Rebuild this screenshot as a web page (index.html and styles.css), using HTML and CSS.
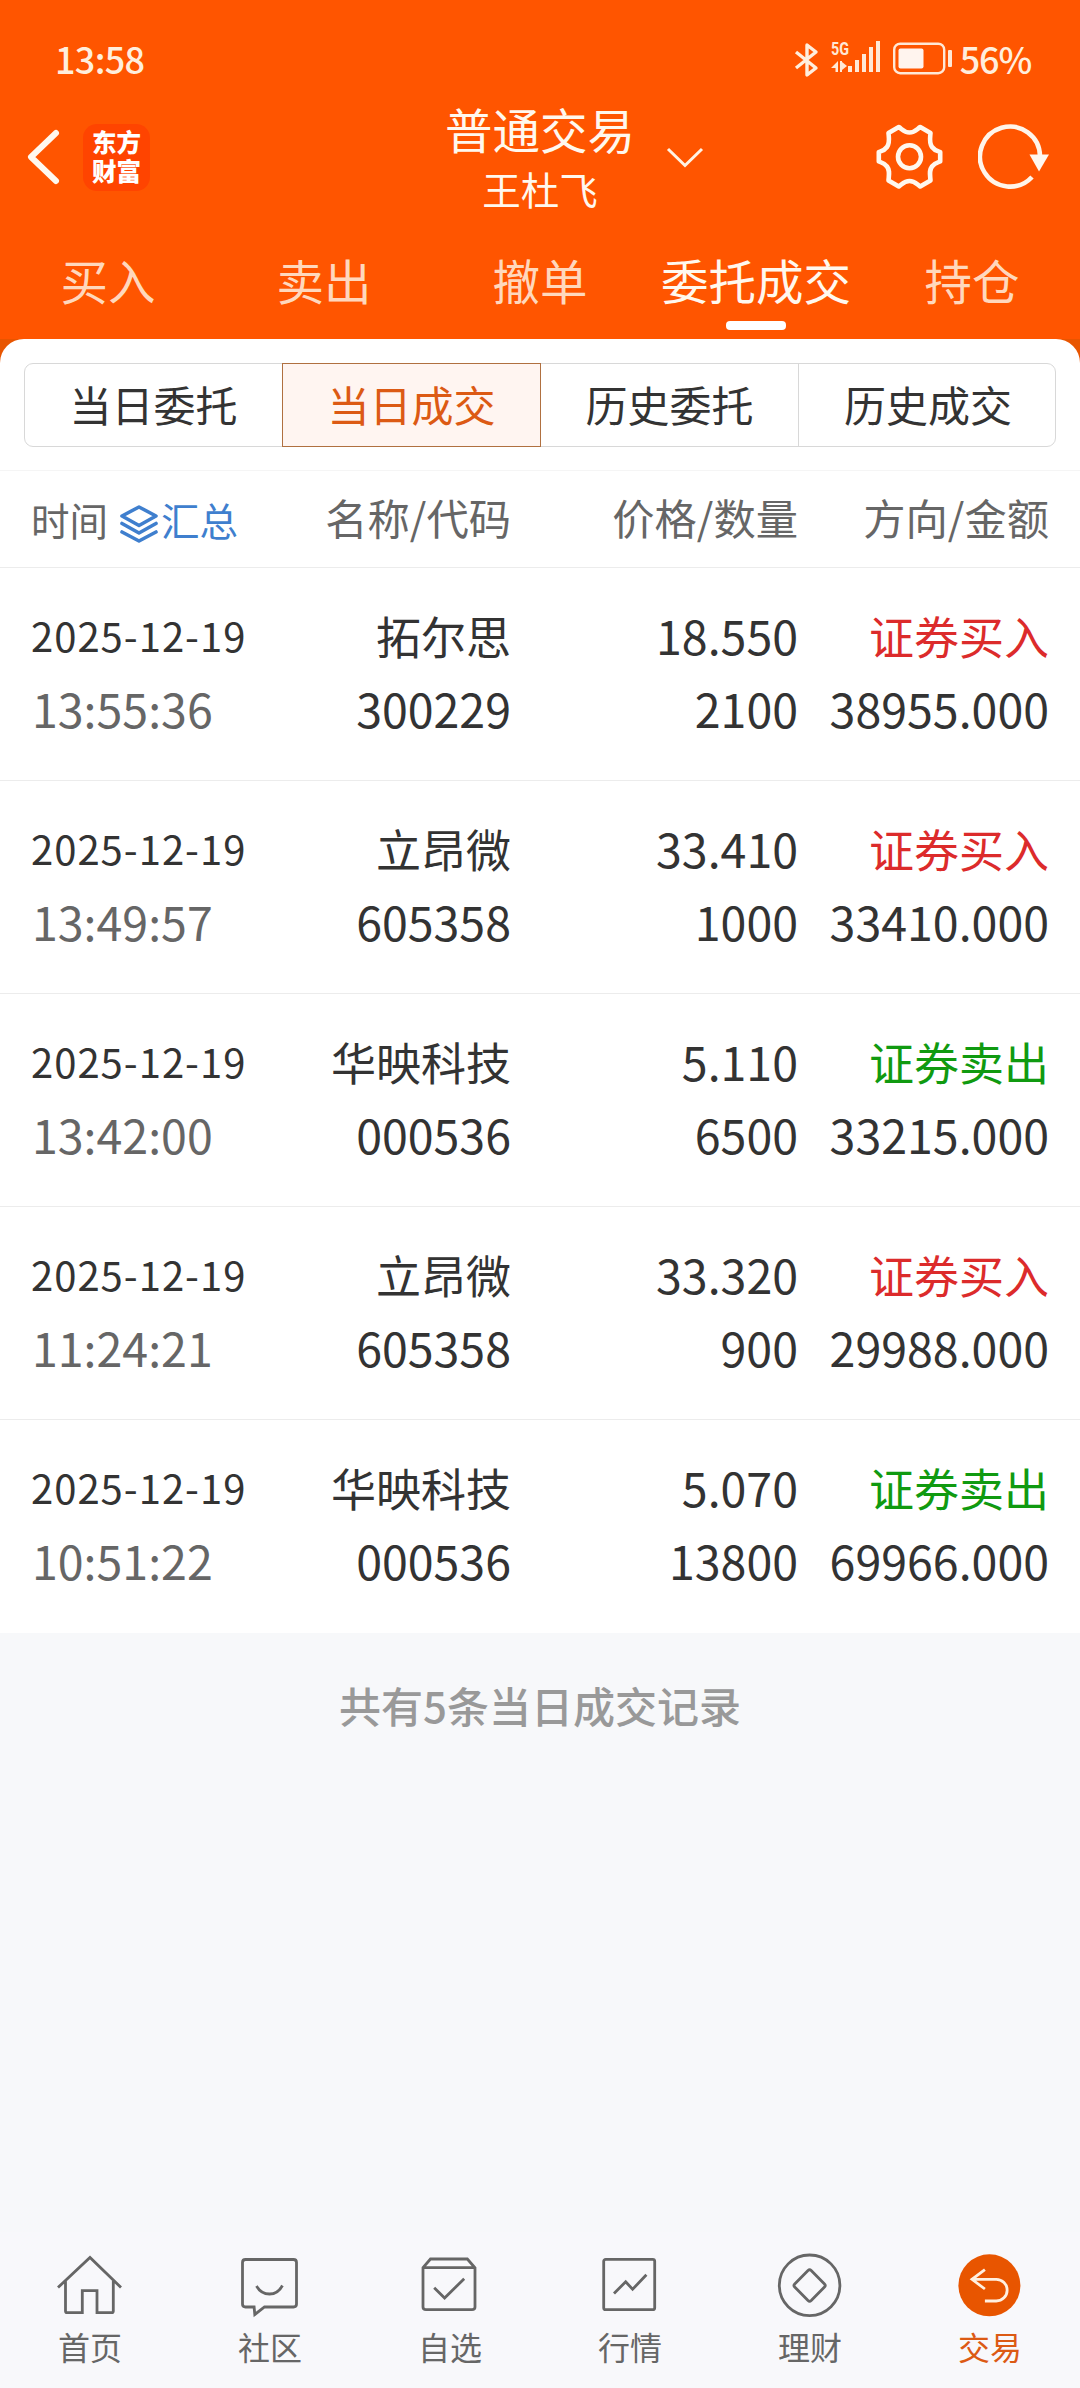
FILE: index.html
```
<!DOCTYPE html>
<html lang="zh-CN">
    <head>
        <meta charset="UTF-8">
        <meta name="viewport" content="width=device-width, initial-scale=1.0">
        <title>普通交易</title>
        <link rel="stylesheet" href="styles.css">
    </head>
    <body>
        <div class="header">
            <div class="status-bar">
                <span class="clock">13:58</span>
                <div class="status-icons">
                    <svg class="bluetooth" width="26" height="36" viewBox="0 0 26 36"><path d="M2 10 L22 26 L13 33 V3 L22 10 L2 26"/></svg>
                    <!-- network type, data arrows and signal bars -->
                    <svg class="signal" width="52" height="48" viewBox="0 -6 52 48">
                        <text x="0" y="14.500" textLength="18" lengthAdjust="spacingAndGlyphs">5G</text>
                        <path d="M7 21 V32 H4.500 V28 H0 Z M9 21 V32 H11 V30 L16 26 L11 22 V21 Z"/>
                        <path d="M17 26h4v6h-4z M24 20h4v12h-4z M31 14h4v18h-4z M38 7h4v25h-4z M45 1h4v31h-4z"/>
                    </svg>
                    <svg class="battery" width="60" height="34" viewBox="0 0 60 34">
                        <rect x="1.200" y="1.700" width="50" height="29.500" rx="6" fill="none" stroke="#ffe8d6" stroke-width="2.400"/>
                        <rect x="5.500" y="6.500" width="25" height="20" rx="2" fill="#fff4ee"/>
                        <rect x="55" y="8" width="4" height="17" rx="1" fill="#ffe8d6"/>
                    </svg>
                    <span class="percent">56%</span>
                </div>
            </div>

            <div class="title-bar">
                <div class="title-left">
                    <svg width="40" height="60" viewBox="0 0 40 60"><path d="M31 6 L6 30 L31 54" fill="none" stroke="#fff8ee" stroke-width="6" stroke-linecap="round" stroke-linejoin="round"/></svg>
                    <div class="logo">东方<br>财富</div>
                </div>
                <div class="title-text">
                    <h1>普通交易</h1>
                    <p>王杜飞</p>
                </div>
                <div class="title-right">
                    <svg class="chevron" width="38" height="22" viewBox="0 0 38 22"><path d="M2 3 L19 19.500 L36 3" fill="none" stroke="#fff3e4" stroke-width="3"/></svg>
                    <svg class="gear" width="67" height="66" viewBox="0 0 67 66" fill="none" stroke="#fff8ee" stroke-width="4.600" stroke-linejoin="round">
                        <path d="M22.800 3 C26 5 28 8.500 33.500 8.500 S41 5 44.200 3 L54.500 9 C54 15 53 19 56 23 S62 27 64.200 28 L64.200 37.500 C62 38.500 59 38.500 56 42.500 S54 50 54.500 56.500 L44.200 62.500 C41 60.500 39 57 33.500 57 S26 60.500 22.800 62.500 L12.500 56.500 C13 50 14 46.500 11 42.500 S5 38.500 2.800 37.500 L2.800 28 C5 27 8 27 11 23 S13 15 12.500 9 Z"/>
                        <circle cx="33.500" cy="32.700" r="11.500"/>
                    </svg>
                    <svg class="refresh" width="72" height="66" viewBox="0 0 72 66">
                        <path d="M62 32 A30 30 0 1 0 54 53" fill="none" stroke="#fff5ea" stroke-width="4.600"/>
                        <path d="M51.500 30.500 H71 L61 47.500 Z" fill="#fff8f0"/>
                    </svg>
                </div>
            </div>

            <div class="tabs">
                <span>买入</span>
                <span>卖出</span>
                <span>撤单</span>
                <span class="active">委托成交</span>
                <span>持仓</span>
            </div>
        </div>

        <div class="panel-wrap">
            <div class="panel">
                <div class="segments">
                    <span>当日委托</span>
                    <span class="active">当日成交</span>
                    <span>历史委托</span>
                    <span>历史成交</span>
                </div>
            </div>
        </div>

        <div class="row table-head">
            <div class="time-head">
                时间
                <svg width="40" height="40" viewBox="0 0 40 40"><path d="M20 4 L37 13 L20 22.500 L3 13 Z M3 20.500 L20 30 L37 20.500 M3 29 L20 38 L37 29"/></svg>
                <a>汇总</a>
            </div>
            <div>名称/代码</div>
            <div>价格/数量</div>
            <div>方向/金额</div>
        </div>

        <div class="list">
            <div class="row">
                <div><p class="date">2025-12-19</p><p class="time">13:55:36</p></div>
                <div><p>拓尔思</p><p class="num">300229</p></div>
                <div><p class="num">18.550</p><p class="num">2100</p></div>
                <div><p class="buy">证券买入</p><p class="num">38955.000</p></div>
            </div>
            <div class="row">
                <div><p class="date">2025-12-19</p><p class="time">13:49:57</p></div>
                <div><p>立昂微</p><p class="num">605358</p></div>
                <div><p class="num">33.410</p><p class="num">1000</p></div>
                <div><p class="buy">证券买入</p><p class="num">33410.000</p></div>
            </div>
            <div class="row">
                <div><p class="date">2025-12-19</p><p class="time">13:42:00</p></div>
                <div><p>华映科技</p><p class="num">000536</p></div>
                <div><p class="num">5.110</p><p class="num">6500</p></div>
                <div><p class="sell">证券卖出</p><p class="num">33215.000</p></div>
            </div>
            <div class="row">
                <div><p class="date">2025-12-19</p><p class="time">11:24:21</p></div>
                <div><p>立昂微</p><p class="num">605358</p></div>
                <div><p class="num">33.320</p><p class="num">900</p></div>
                <div><p class="buy">证券买入</p><p class="num">29988.000</p></div>
            </div>
            <div class="row">
                <div><p class="date">2025-12-19</p><p class="time">10:51:22</p></div>
                <div><p>华映科技</p><p class="num">000536</p></div>
                <div><p class="num">5.070</p><p class="num">13800</p></div>
                <div><p class="sell">证券卖出</p><p class="num">69966.000</p></div>
            </div>
        </div>

        <p class="summary">共有5条当日成交记录</p>

        <div class="bottom-nav">
            <div class="nav-item">
                <svg viewBox="0 0 72 72"><path d="M4 37.500 L36 7.500 L67 37.500 M11.500 31 V61 Q11.500 62.700 13 62.700 H28.300 V40.700 H43 V62.700 H57.800 Q59.300 62.700 59.300 61 V31"/></svg>
                <span>首页</span>
            </div>
            <div class="nav-item">
                <svg viewBox="0 0 72 72"><path d="M11.500 9.500 H59.500 Q62.500 9.500 62.500 12.500 V54 Q62.500 57 59.500 57 H30.500 L20.800 64.500 L20.100 57 H11.500 Q8.500 57 8.500 54 V12.500 Q8.500 9.500 11.500 9.500 Z M22.500 36 Q27 44 35.500 44 T48.400 35.500"/></svg>
                <span>社区</span>
            </div>
            <div class="nav-item">
                <svg viewBox="0 0 72 72"><path d="M9 17.700 L16.500 9 H53.300 L61 17.700 V57 Q61 59.700 58 59.700 H12 Q9 59.700 9 57 Z H61 M20.200 37.700 L30.600 48 L50.200 28.700"/></svg>
                <span>自选</span>
            </div>
            <div class="nav-item">
                <svg viewBox="0 0 72 72"><rect x="9.700" y="9.300" width="51" height="50.400" rx="2"/><path d="M20 43.500 L31.700 31.700 L38.600 39.300 L52.400 24.700"/></svg>
                <span>行情</span>
            </div>
            <div class="nav-item">
                <svg viewBox="0 0 72 72"><circle cx="35.600" cy="35.300" r="30.300"/><path d="M34 20.500 Q35.600 19 37.200 20.500 L50.500 34 Q52 35.500 50.500 37 L37.200 50.500 Q35.600 52 34 50.500 L20.700 37 Q19.200 35.500 20.700 34 Z"/></svg>
                <span>理财</span>
            </div>
            <div class="nav-item active">
                <svg viewBox="0 0 72 72"><circle cx="35.400" cy="35.300" r="31"/><path d="M30.900 19.700 L18 29.300 L30.900 39 M18 29.300 H42.300 A10.800 10.800 0 0 1 42.300 51 H30.900"/></svg>
                <span>交易</span>
            </div>
        </div>
    </body>
</html>
```
FILE: styles.css
```
* {
    box-sizing: border-box;
}
body {
    margin: 0;
    height: 2388px;
    display: flex;
    flex-direction: column;
    font-family: "Noto Sans CJK SC", sans-serif;
    color: #333;
    background-color: #f7f8fa;
}
h1, p {
    margin: 0;
    font-weight: normal;
}
svg {
    display: block;
    flex-shrink: 0;
}

/* Orange header */
.header {
    height: 339px;
    background-color: #ff5500;
    color: #fff8ee;
}
.status-bar {
    height: 116px;
    padding: 0 49px 0 55px;
    display: flex;
    align-items: center;
    justify-content: space-between;
    font-size: 36px;
    font-weight: 500;
    line-height: 34px;
    color: #ffeedd;
}
.clock {
    letter-spacing: -0.7px;
}
.status-icons {
    display: flex;
    align-items: center;
}
.bluetooth {
    margin: 4px 11px 0 0;
    fill: none;
    stroke: #ffeedd;
    stroke-width: 3.4;
    stroke-linejoin: round;
}
.signal {
    margin: 0 10px 0 0;
    fill: #ffe8d6;
}
.signal text {
    font-family: Roboto, sans-serif;
    font-size: 19px;
    font-weight: bold;
}
.battery {
    margin: 2px 7px 0 0;
}
.percent {
    letter-spacing: -1.2px;
}
.title-bar {
    height: 108px;
    display: grid;
    grid-template-columns: 1fr auto 1fr;
}
.title-left {
    display: flex;
    padding: 8px 0 0 25px;
}
.title-left svg {
    margin-top: 3px;
}
.logo {
    width: 67px;
    height: 67px;
    margin-left: 18px;
    padding: 3px 0 0 9px;
    border-radius: 14px;
    background-color: #ff4400;
    color: #fff;
    font-size: 24.5px;
    font-weight: 900;
    line-height: 29px;
}
.title-text {
    text-align: center;
}
.title-text h1 {
    font-size: 47.5px;
    line-height: 62px;
    margin-top: -18px;
}
.title-text p {
    font-size: 38.5px;
    line-height: 56px;
}
.title-right {
    display: flex;
    padding: 8px 30px 0 0;
}
.chevron {
    margin: 22px auto 0 31px;
}
.refresh {
    margin-left: 35px;
}
.tabs {
    height: 115px;
    display: grid;
    grid-template-columns: repeat(5, 216px);
    text-align: center;
    font-size: 47.5px;
    line-height: 112px;
    color: #ffd8bd;
}
.tabs .active {
    color: #fff8ee;
}
.tabs .active::after {
    content: "";
    display: block;
    width: 60px;
    height: 9px;
    margin: -15px auto 0;
    border-radius: 4px;
    background-color: #fff;
}

/* White panel with the order/deal switch */
.panel-wrap {
    background-color: #e85500;
}
.panel {
    height: 132px;
    padding: 24px 24px 0;
    border-radius: 24px 24px 0 0;
    border-bottom: 1px solid #f5f5f5;
    background-color: #fff;
}
.segments {
    height: 84px;
    display: grid;
    grid-template-columns: repeat(4, 258px);
    border: 1px solid #d8d8d8;
    border-radius: 9px;
    text-align: center;
    font-size: 42px;
    line-height: 79px;
}
.segments span {
    margin: -1px 0;
    padding-top: 1px;
    border-right: 1px solid #d8d8d8;
}
.segments span:last-child {
    border-right: none;
}
.segments .active {
    margin-left: -1px;
    padding-top: 0;
    border: 1px solid #b07040;
    background-color: #fff5f1;
    color: #dc5a14;
}

/* Deal list */
.row {
    display: grid;
    grid-template-columns: 230px 249px 287px 251px;
    padding: 0 31px 0 32px;
    height: 213px;
    border-bottom: 1px solid #ececec;
    background-color: #fff;
    text-align: right;
    white-space: nowrap;
}
.table-head {
    height: 97px;
    font-size: 42.3px;
    line-height: 91px;
    color: #666;
}
.time-head {
    display: flex;
    align-items: center;
    font-size: 38.5px;
    margin-left: -1px;
}
.time-head svg {
    margin: 8px 2px 0 11px;
    fill: none;
    stroke: #3f7fce;
    stroke-width: 3.6;
    stroke-linejoin: round;
    stroke-linecap: round;
}
.time-head a {
    color: #3f7fce;
}
.list .row {
    padding-top: 31px;
    font-size: 45px;
    line-height: 73px;
}
.list .row:last-child {
    border-bottom: none;
}
.list p {
    height: 73px;
}
.list .num, .list .time {
    font-size: 46.5px;
    line-height: 71px;
}
.list .time, .list .date {
    text-align: left;
}
.list .date {
    font-size: 40px;
    letter-spacing: 1px;
    margin-left: -1px;
}
.list .time {
    color: #666;
}
.list .buy {
    color: #dc2b2b;
}
.list .sell {
    color: #109a10;
}
.summary {
    margin-top: 41px;
    text-align: center;
    font-size: 42px;
    font-weight: 500;
    line-height: 62px;
    color: #999;
}

/* Bottom navigation */
.bottom-nav {
    margin-top: auto;
    height: 156px;
    display: grid;
    grid-template-columns: repeat(6, 180px);
    padding-top: 18px;
    background-color: #f8f8fb;
}
.nav-item {
    display: flex;
    flex-direction: column;
    align-items: center;
    font-size: 32px;
    line-height: 48px;
    color: #666;
}
.nav-item svg {
    width: 72px;
    height: 72px;
    fill: none;
    stroke: #666;
    stroke-width: 2.8;
}
.nav-item.active {
    color: #dc5a14;
}
.nav-item.active circle {
    fill: #e85500;
    stroke: none;
}
.nav-item.active path {
    stroke: #fff0e0;
}
```
